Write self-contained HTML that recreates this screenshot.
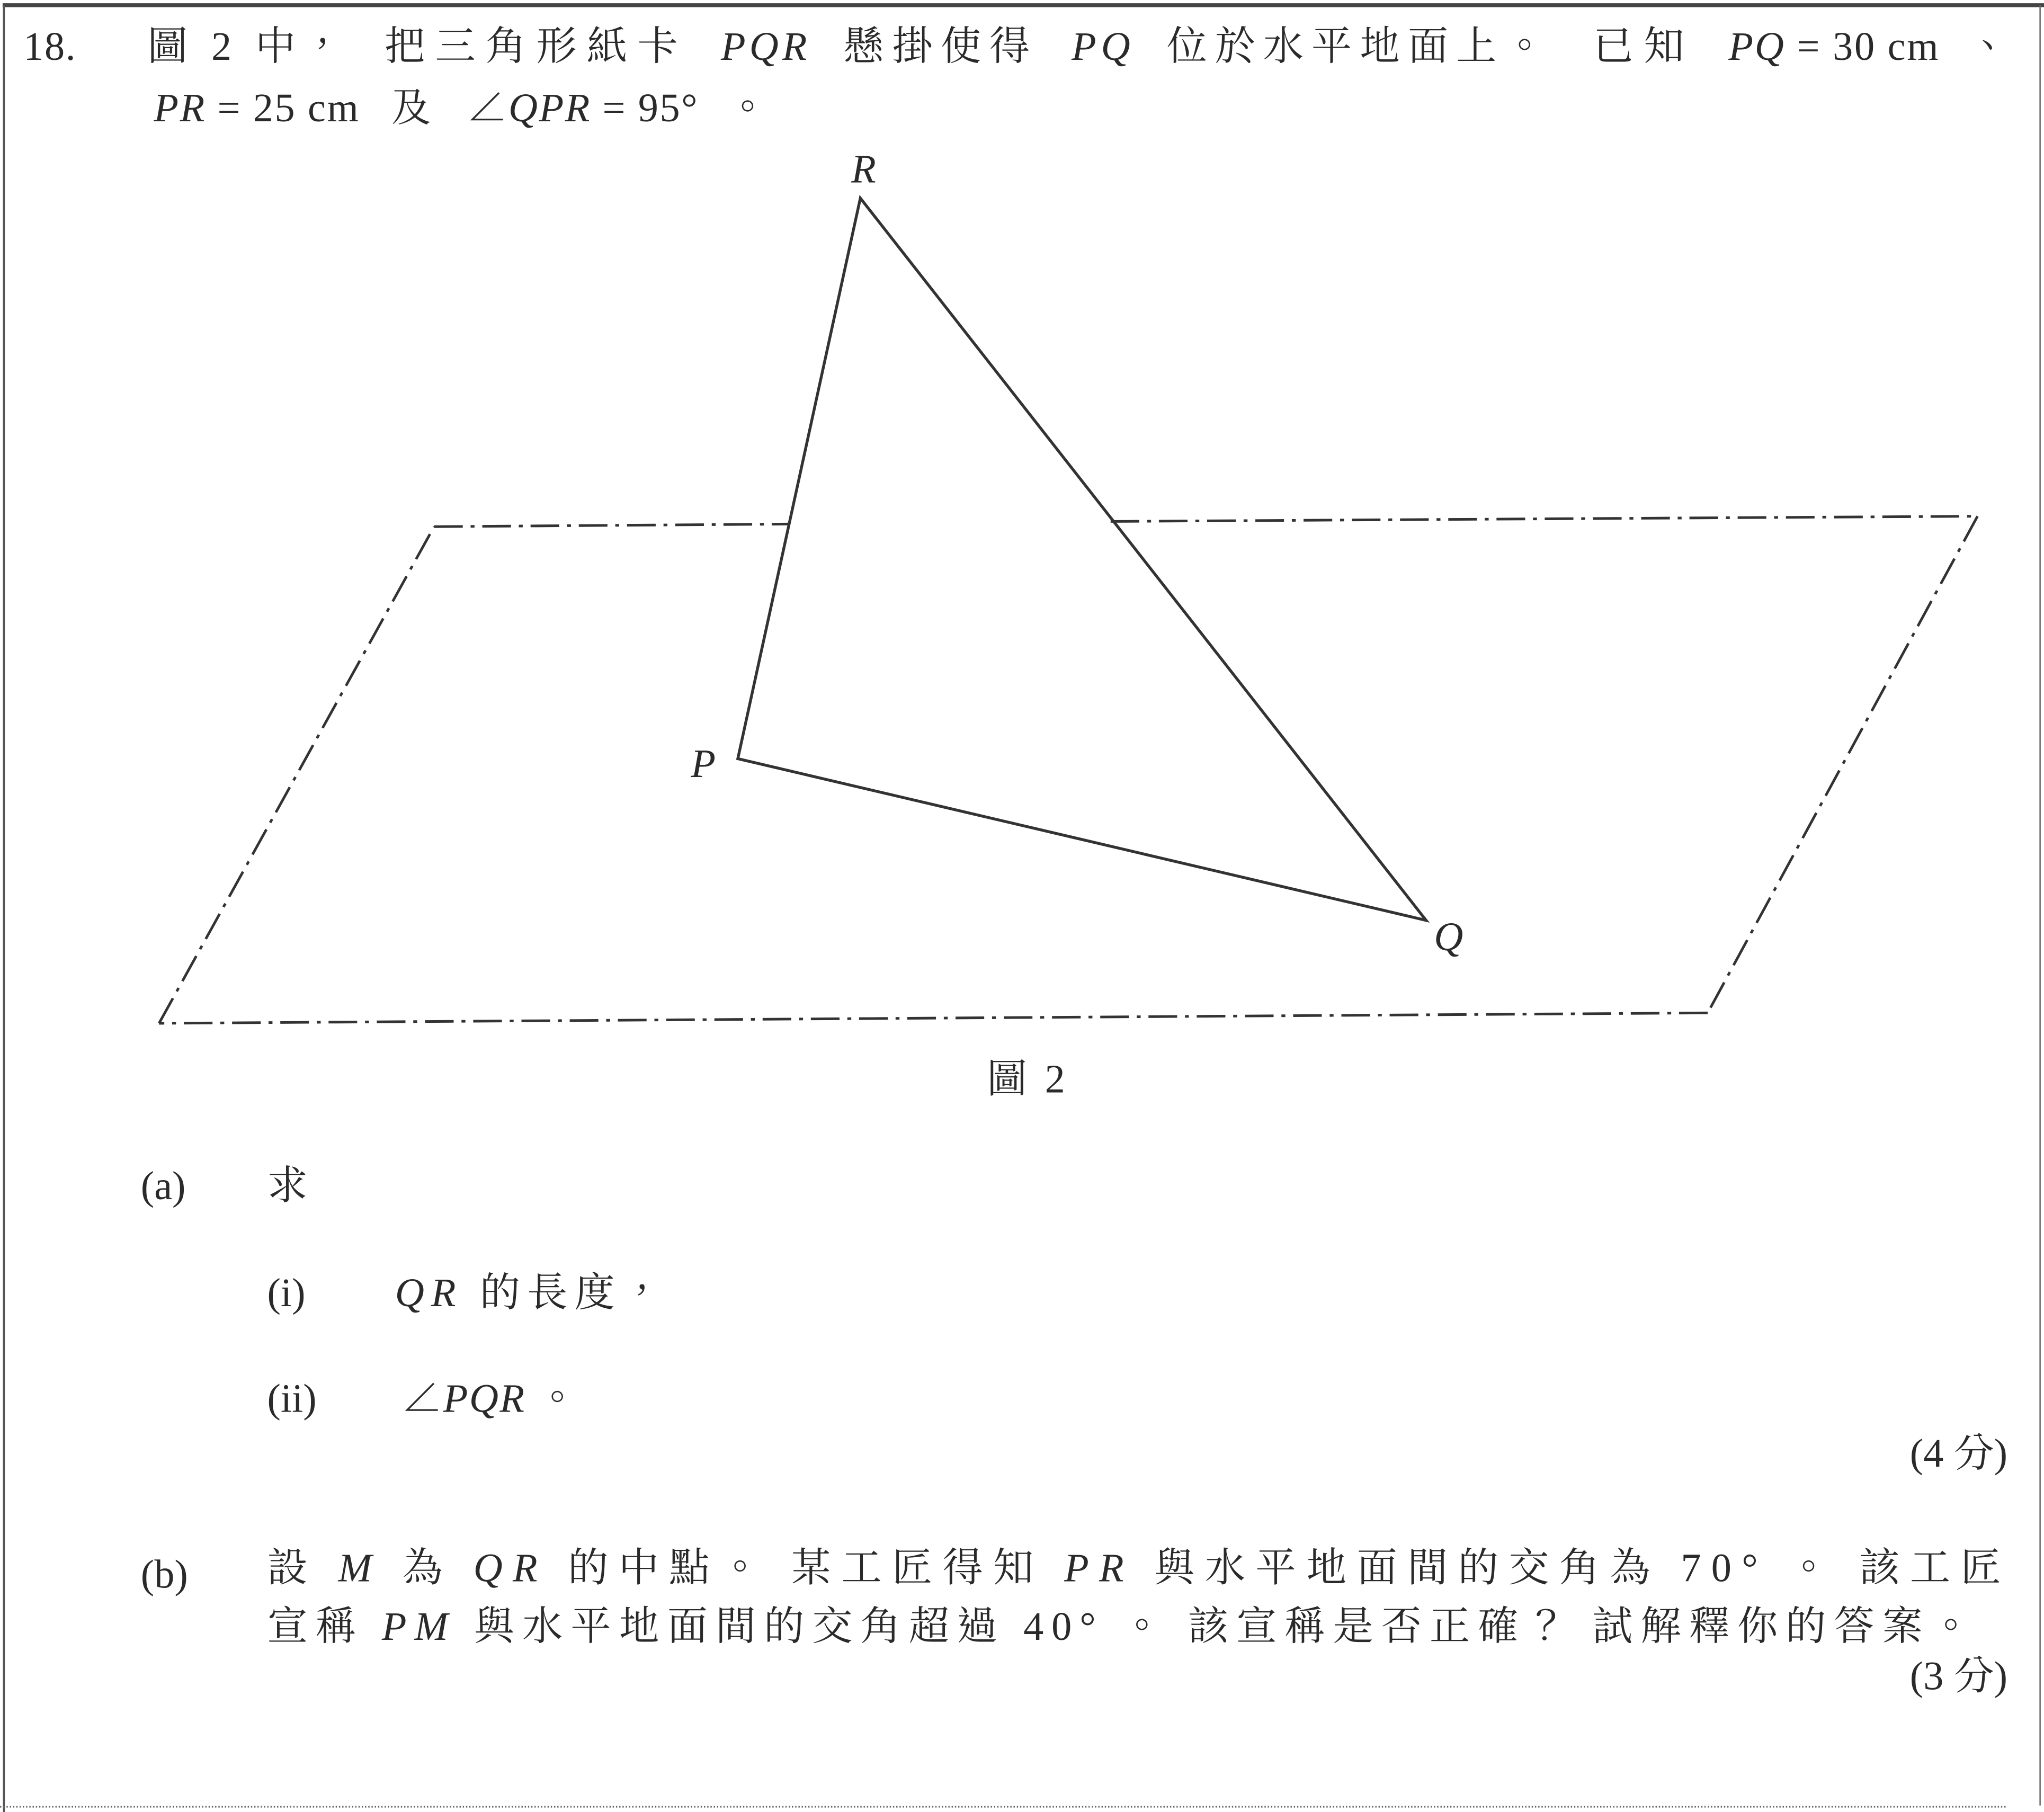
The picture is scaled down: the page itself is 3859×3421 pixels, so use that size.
<!DOCTYPE html>
<html><head><meta charset="utf-8">
<style>
html,body{margin:0;padding:0;background:#fff;}
svg{display:block;}
text{font-family:"Liberation Serif","Noto Serif CJK TC","Noto Serif CJK SC",serif;fill:#2a2a2a;font-size:31px;}
.i{font-style:italic;}
</style></head>
<body>
<svg width="3859" height="3421" viewBox="0 0 1568 1390" preserveAspectRatio="none" xmlns="http://www.w3.org/2000/svg">
<rect x="0" y="0" width="1568" height="1390" fill="#fff"/>
<!-- border -->
<line x1="2" y1="4" x2="1568" y2="4" stroke="#444" stroke-width="3"/>
<line x1="3" y1="4" x2="3" y2="1390" stroke="#555" stroke-width="1.5"/>
<line x1="1565" y1="4" x2="1565" y2="1385" stroke="#666" stroke-width="1"/>
<line x1="0" y1="1386" x2="1540" y2="1386" stroke="#666" stroke-width="1.2" stroke-dasharray="1 1.5"/>

<!-- question text -->
<text x="18" y="46" textLength="40">18.</text>
<text x="113" y="46" textLength="150">圖 2 中，</text>
<text x="295" y="46" textLength="225">把三角形紙卡</text>
<text x="553" y="46" textLength="66" class="i">PQR</text>
<text x="647" y="46" textLength="143">懸掛使得</text>
<text x="822" y="46" textLength="45" class="i">PQ</text>
<text x="895" y="46" textLength="290">位於水平地面上。</text>
<text x="1222" y="46" textLength="70">已知</text>
<text x="1326" y="46" textLength="161"><tspan class="i">PQ</tspan> = 30 cm</text>
<text x="1510" y="46">、</text>

<text x="118" y="93" textLength="157"><tspan class="i">PR</tspan> = 25 cm</text>
<text x="300" y="93">及</text>
<text x="358" y="93" textLength="177">∠<tspan class="i">QPR</tspan> = 95°</text>
<text x="558" y="93">。</text>

<!-- figure -->
<g fill="none" stroke="#333" stroke-width="2" stroke-dasharray="22 6 3 6">
<line x1="333" y1="404" x2="605" y2="402"/>
<line x1="852" y1="400" x2="1517" y2="396"/>
<line x1="1517" y1="396" x2="1310" y2="777"/>
<line x1="1310" y1="777" x2="122" y2="785"/>
<line x1="122" y1="785" x2="333" y2="404"/>
</g>
<polygon points="660,152 566,582 1094,706" fill="none" stroke="#333" stroke-width="2.2"/>
<text x="653" y="140" class="i">R</text>
<text x="530" y="596" class="i">P</text>
<text x="1100" y="729" class="i">Q</text>
<text x="757" y="838" textLength="60">圖 2</text>

<!-- (a) -->
<text x="108" y="920">(a)</text>
<text x="205" y="920">求</text>
<text x="205" y="1002">(i)</text>
<text x="303" y="1002" textLength="205"><tspan class="i">QR</tspan> 的長度，</text>
<text x="205" y="1083">(ii)</text>
<text x="308" y="1083" textLength="135">∠<tspan class="i">PQR</tspan>  。</text>
<text x="1540" y="1125" text-anchor="end">(4 分)</text>

<!-- (b) -->
<text x="108" y="1218">(b)</text>
<text x="205" y="1213" textLength="1330">設 <tspan class="i">M</tspan> 為 <tspan class="i">QR</tspan> 的中點。 某工匠得知 <tspan class="i">PR</tspan> 與水平地面間的交角為 70° 。 該工匠</text>
<text x="205" y="1258" textLength="1307">宣稱 <tspan class="i">PM</tspan> 與水平地面間的交角超過 40° 。 該宣稱是否正確？ 試解釋你的答案。</text>
<text x="1540" y="1296" text-anchor="end">(3 分)</text>
</svg>
</body></html>
